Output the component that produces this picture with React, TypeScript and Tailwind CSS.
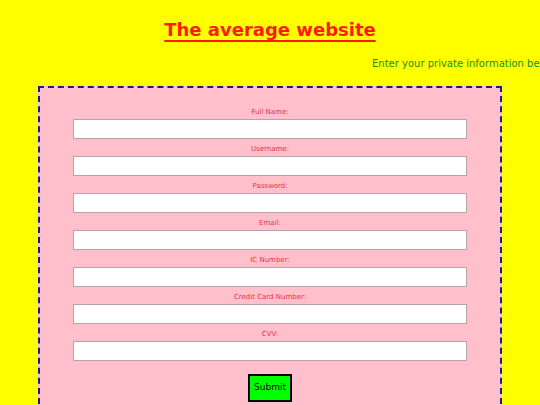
import React from 'react';

const fields = ['Full Name:', 'Username:', 'Password:', 'Email:', 'IC Number:', 'Credit Card Number:', 'CVV:'];

export default function App() {
  return (
    <div className="min-h-[405px] bg-[#ffff00] font-['Comic_Sans_MS','DejaVu_Sans',sans-serif] overflow-hidden">
      <h1 className="pt-[15px] text-center text-[18px] leading-[30px] font-bold text-[#ff1a0a] underline decoration-2 underline-offset-[4px]">
        The average website
      </h1>
      <div className="mt-[12px] overflow-hidden whitespace-nowrap pl-[372px] text-[10px] leading-[14px] text-[#189018]">
        Enter your private information below
      </div>
      <form className="mx-[38px] mt-[15px] border-2 border-dashed border-[#1a1aa0] bg-[#ffc0cb] px-[33px] pt-[19px] pb-[10px]">
        {fields.map((f) => (
          <div key={f}>
            <label className="block text-center text-[7px] leading-[10px] text-[#e8304a]">{f}</label>
            <input type="text" className="mt-[2px] mb-[5px] block h-[20px] w-full border border-[#b9a3a8] bg-white" />
          </div>
        ))}
        <div className="flex justify-center pt-[8px]">
          <button type="button" className="h-[28px] w-[44px] border-2 border-black bg-[#00ff00] text-[9px] text-black">
            Submit
          </button>
        </div>
      </form>
    </div>
  );
}
